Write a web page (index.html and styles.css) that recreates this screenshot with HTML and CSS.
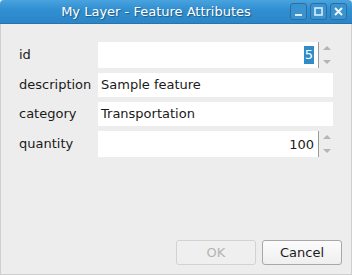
FILE: index.html
```html
<!DOCTYPE html>
<html lang="en">

<head>
    <meta charset="UTF-8">
    <title>My Layer - Feature Attributes</title>
    <link rel="stylesheet" href="styles.css">
</head>

<body>
    <div class="window">
        <div class="titlebar">
            <span class="title">My Layer - Feature Attributes</span>
            <div class="wm-buttons">
                <span class="wm-btn">
                    <svg width="17" height="17" viewBox="0 0 17 17"><rect x="5" y="11" width="7" height="2" fill="#dceefa"/></svg>
                </span>
                <span class="wm-btn">
                    <svg width="17" height="17" viewBox="0 0 17 17"><rect x="5" y="5" width="7" height="7" fill="none" stroke="#dceefa" stroke-width="1.6"/></svg>
                </span>
                <span class="wm-btn">
                    <svg width="17" height="17" viewBox="0 0 17 17"><path d="M5 5 L12 12 M12 5 L5 12" stroke="#eef7fd" stroke-width="2"/></svg>
                </span>
            </div>
        </div>
        <div class="content">
            <div class="form">
                <label>id</label>
                <div class="spinbox">
                    <div class="spin-value"><span class="selected">5</span></div>
                    <div class="spin-arrows"><span class="up"></span><span class="down"></span></div>
                </div>
                <label>description</label>
                <div class="lineedit">Sample feature</div>
                <label>category</label>
                <div class="lineedit">Transportation</div>
                <label>quantity</label>
                <div class="spinbox">
                    <div class="spin-value">100</div>
                    <div class="spin-arrows"><span class="up"></span><span class="down"></span></div>
                </div>
            </div>
            <div class="buttons">
                <button class="btn" disabled>OK</button>
                <button class="btn">Cancel</button>
            </div>
        </div>
    </div>
</body>

</html>
```

FILE: styles.css
```css
body {
    margin: 0;
    font-family: "DejaVu Sans", sans-serif;
    font-size: 13px;
    color: #1a1a1a;
}

.window {
    width: 352px;
    height: 275px;
    display: flex;
    flex-direction: column;
    background: #ededed;
    box-sizing: border-box;
}

.titlebar {
    height: 24px;
    background: linear-gradient(#4aa3de, #3190d2 40%, #2b85c6);
    border-radius: 4px 4px 0 0;
    border-bottom: 1px solid #2673ad;
    box-sizing: border-box;
    display: flex;
    align-items: center;
    justify-content: center;
    position: relative;
}

.title {
    color: #ffffff;
    font-size: 13px;
    text-shadow: 1px 1px 1px #1d5a86;
    margin-right: 40px;
}

.wm-buttons {
    position: absolute;
    right: 5px;
    top: 3px;
    display: flex;
    gap: 3px;
}

.wm-btn {
    width: 17px;
    height: 17px;
    border: 1px solid #2a6fa6;
    border-radius: 3px;
    background: #3a92cf;
    box-sizing: border-box;
    display: flex;
    align-items: center;
    justify-content: center;
}

.wm-btn svg {
    flex: none;
}

.content {
    flex: 1;
    display: flex;
    flex-direction: column;
    justify-content: space-between;
    border: 1px solid #cfcfcf;
    border-top: none;
}

.form {
    display: grid;
    grid-template-columns: 79px 235px;
    row-gap: 5px;
    padding: 18px 0 0 18px;
    align-items: center;
}

.form label {
    line-height: 16px;
}

.lineedit {
    height: 24px;
    background: #ffffff;
    line-height: 24px;
    padding: 0 3px;
    box-sizing: border-box;
}

.spinbox {
    height: 26px;
    display: flex;
}

.spin-value {
    flex: 1;
    background: #ffffff;
    display: flex;
    align-items: center;
    justify-content: flex-end;
    padding-right: 4px;
    border-right: 1px solid #9a9a9a;
}

.selected {
    background: #308cc6;
    color: #ffffff;
    padding: 1px 1px;
    line-height: 16px;
}

.spin-arrows {
    width: 12px;
    display: flex;
    flex-direction: column;
    justify-content: space-between;
    align-items: center;
    padding: 4px 0 4px 2px;
}

.up {
    width: 0;
    height: 0;
    border-left: 4px solid transparent;
    border-right: 4px solid transparent;
    border-bottom: 4px solid #b5b5b5;
}

.down {
    width: 0;
    height: 0;
    border-left: 4px solid transparent;
    border-right: 4px solid transparent;
    border-top: 4px solid #b5b5b5;
}

.buttons {
    display: flex;
    justify-content: flex-end;
    gap: 6px;
    padding: 0 9px 9px 0;
}

.btn {
    width: 80px;
    height: 25px;
    font-family: "DejaVu Sans", sans-serif;
    font-size: 13px;
    color: #1a1a1a;
    border: 1px solid #a8a8a8;
    border-radius: 3px;
    background: linear-gradient(#fbfbfb, #efefef);
    padding: 0;
}

.btn:disabled {
    color: #b4b4b4;
    border-color: #d2d2d2;
    background: #efefef;
}
```
